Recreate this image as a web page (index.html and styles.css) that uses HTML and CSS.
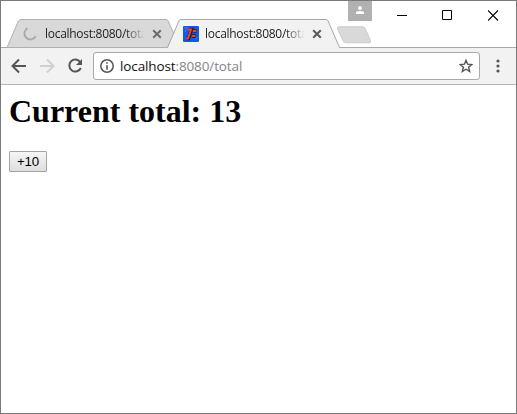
FILE: index.html
```html
<!DOCTYPE html>
<html lang="en">
<head>
<meta charset="utf-8">
<title>localhost:8080/total</title>
<link rel="stylesheet" href="styles.css">
</head>
<body>
<div class="window">
  <header class="strip">
    <div class="tab">
      <svg class="shape" viewBox="0 0 173 29"><path d="M0 28.500L11.500 1.800Q12.300 .5 14 .5H159Q160.300 .5 161 1.800L167 15L160.500 28.500Z" fill="#d9d9d9" stroke="#b0b0b0"/></svg>
      <svg class="favicon" viewBox="0 0 16 16"><path d="M4.500 2.200A6 6 0 1 0 12.700 10.300" fill="none" stroke="#aaa" stroke-width="2"/></svg>
      <span class="title">localhost:8080/total</span>
      <svg class="close" viewBox="0 0 10 10"><path d="M1.200 1.200L8.800 8.800M8.800 1.200L1.200 8.800" stroke="#6c6c6c" stroke-width="2"/></svg>
    </div>
    <div class="tab active">
      <svg class="shape" viewBox="0 0 173 29"><path d="M0 29L0.500 28.500L12 1.800Q12.700 .5 14 .5H159Q160.300 .5 161 1.800L172.500 28.500L173 29" fill="#f2f2f2" stroke="#a6a6a6"/></svg>
      <svg class="favicon" viewBox="0 0 16 16"><rect width="16" height="16" rx="1" fill="#1557e6"/><path d="M1 2L4 1L2 6M12 13L15 11" stroke="#3478ff" fill="none"/><path d="M6.500 3.500H8.500L5.500 12.500H3.500M8.500 3.500L5.500 12.500" stroke="#201529" stroke-width="3.400" fill="none"/><path d="M9.500 4.800H13.500M8.800 10H12.800" stroke="#201529" stroke-width="3.600"/><path d="M4.500 3.500H8L5 12.500H3" fill="none" stroke="#ef4226" stroke-width="2"/><path d="M9.800 4.800H13.300M9 10H12.500" stroke="#ef4226" stroke-width="2.200"/></svg>
      <span class="title">localhost:8080/total</span>
      <svg class="close" viewBox="0 0 10 10"><path d="M1.200 1.200L8.800 8.800M8.800 1.200L1.200 8.800" stroke="#5a5a5a" stroke-width="2"/></svg>
    </div>
    <svg class="newtab" viewBox="0 0 36 18"><path d="M3 .8H26.500Q28.500 .8 29.200 2.500L34.500 14.500Q35.300 16.800 33 16.800H10Q8 16.800 7.200 15L1.600 3Q.8 .8 3 .8Z" fill="#d9d9d9" stroke="#cbcbcb"/></svg>
    <div class="controls">
      <div class="profile"><svg viewBox="0 0 8 8"><circle cx="4" cy="2" r="2" fill="#fff"/><path d="M0 8V6.500Q0 5 4 5T8 6.500V8Z" fill="#fff"/></svg></div>
      <svg class="control" viewBox="0 0 11 11"><path d="M0 5.500H10" stroke="#000"/></svg>
      <svg class="control" viewBox="0 0 11 11"><path d="M.5 .5H9.500V9.500H.5Z" fill="none" stroke="#000"/></svg>
      <svg class="control" viewBox="0 0 11 11"><path d="M0 .5L10 10.500M10 .5L0 10.500" stroke="#000" stroke-width="1.100"/></svg>
    </div>
  </header>
  <nav class="toolbar">
    <svg class="nav" viewBox="0 0 16 16"><path d="M15 8H2M8 1.500L1.500 8L8 14.500" fill="none" stroke="#555" stroke-width="2"/></svg>
    <svg class="nav" viewBox="0 0 16 16"><path d="M1 8H14M8 1.500L14.500 8L8 14.500" fill="none" stroke="#d0d0d0" stroke-width="2"/></svg>
    <svg class="nav" viewBox="0 0 16 16"><path d="M13.300 4.200A6 6 0 1 0 13.800 10" fill="none" stroke="#555" stroke-width="2"/><path d="M15 1V7H9Z" fill="#555"/></svg>
    <div class="omnibox">
      <svg class="info" viewBox="0 0 14 14"><circle cx="7" cy="7" r="6.200" fill="none" stroke="#555" stroke-width="1.500"/><path d="M7 3.200V4.800M7 6.200V10.800" stroke="#555" stroke-width="1.600"/></svg>
      <span class="url">localhost<span class="path">:8080/total</span></span>
      <svg class="star" viewBox="0 0 14 14"><path d="M7 1.300L8.600 5.200L12.900 5.500L9.600 8.300L10.700 12.500L7 10.200L3.300 12.500L4.400 8.300L1.100 5.500L5.400 5.200Z" fill="none" stroke="#555" stroke-width="1.400"/></svg>
    </div>
    <svg class="menu" viewBox="0 0 4 14"><g fill="#555"><circle cx="2" cy="2" r="1.600"/><circle cx="2" cy="7" r="1.600"/><circle cx="2" cy="12" r="1.600"/></g></svg>
  </nav>
  <main class="page">
    <h1>Current total: 13</h1>
    <button class="add" type="button">+10</button>
  </main>
</div>
</body>
</html>
```
FILE: styles.css
```css
* { box-sizing: border-box; }
body { margin: 0; background: #fff; }
svg { display: block; flex: none; }
.window {
  width: 517px;
  height: 414px;
  border: 1px solid #7a7a7a;
  display: flex;
  flex-direction: column;
  overflow: hidden;
}
.strip {
  height: 47px;
  flex: none;
  display: flex;
  align-items: flex-end;
  padding-left: 6px;
  background: linear-gradient(#a9a9a9, #a9a9a9) bottom / 100% 1px no-repeat;
}
.tab {
  position: relative;
  z-index: 0;
  width: 173px;
  height: 29px;
  flex: none;
  display: flex;
  align-items: center;
  padding-left: 16px;
}
.tab.active { margin-left: -13px; z-index: 1; }
.shape { position: absolute; inset: 0; width: 173px; height: 29px; z-index: -1; }
.favicon { width: 16px; height: 16px; }
.title {
  width: 102px;
  margin-left: 6px;
  overflow: hidden;
  white-space: nowrap;
  font: 12px/16px "Open Sans", "Noto Sans", sans-serif;
  letter-spacing: -0.28px;
  color: #222;
  -webkit-mask-image: linear-gradient(90deg, #000 78%, transparent 98%);
  mask-image: linear-gradient(90deg, #000 78%, transparent 98%);
}
.close { width: 10px; height: 10px; margin-left: 5px; }
.newtab { width: 36px; height: 18px; margin: 0 0 4px -4px; }
.controls {
  align-self: flex-start;
  margin-left: -24px;
  display: flex;
  align-items: flex-start;
  gap: 34px;
}
.profile {
  width: 24px;
  height: 20px;
  margin-right: -9px;
  padding: 5px 8px 0;
  background: #b1b1b1;
}
.profile svg { width: 8px; height: 8px; }
.control { width: 11px; height: 11px; margin-top: 9px; }
.control:last-child { margin-left: 1px; }
.toolbar {
  height: 37px;
  flex: none;
  display: flex;
  align-items: center;
  padding: 0 15px 0 10px;
  background: #f2f2f2;
  border-bottom: 1px solid #b6b6b6;
}
.nav { width: 16px; height: 16px; margin-right: 12px; }
.omnibox {
  width: 387px;
  height: 28px;
  flex: none;
  margin-left: -2px;
  display: flex;
  align-items: center;
  padding: 0 6px;
  background: #fff;
  border: 1px solid #a9a9a9;
  border-radius: 3px;
}
.info { width: 14px; height: 14px; }
.url {
  margin-left: 6px;
  font: 13.500px/20px "Open Sans", "Noto Sans", sans-serif;
  letter-spacing: -0.12px;
  color: #111;
}
.path { color: #858585; }
.star { width: 14px; height: 14px; margin-left: auto; }
.menu { width: 4px; height: 14px; margin-left: 16px; }
.page { padding: 8px; }
h1 {
  margin: 0 0 21px;
  font: bold 32px/37px "Liberation Serif", serif;
  color: #000;
}
.add {
  display: block;
  width: 38px;
  height: 21px;
  padding: 0;
  font: 13.333px/17px "Liberation Sans", sans-serif;
  letter-spacing: -0.2px;
  color: #000;
  background: linear-gradient(#f6f6f6, #dedede);
  border: 1px solid #a3a3a3;
  border-radius: 1px;
}
```
